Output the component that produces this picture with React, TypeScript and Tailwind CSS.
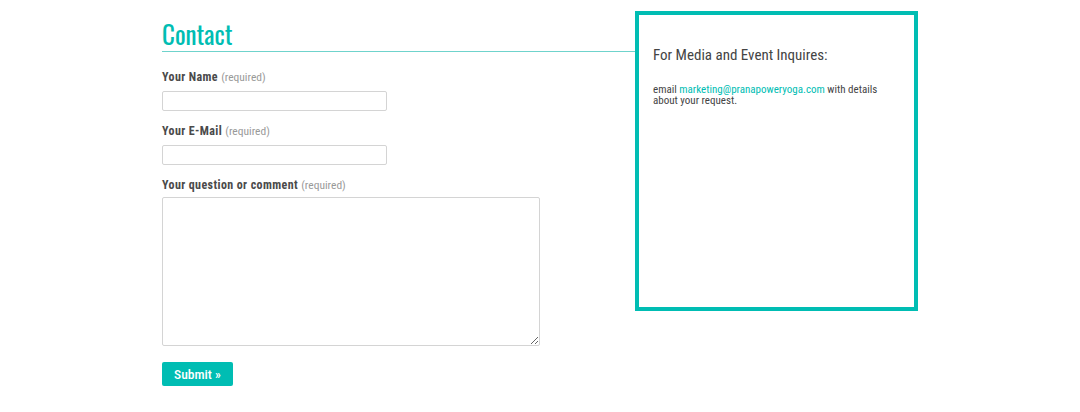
const teal = 'text-[#00bdb3]';

function Field({ label, area }: { label: string; area?: boolean }) {
  return (
    <div className="flex flex-col">
      <label className="text-[12px] leading-[15px] font-bold tracking-[0.4px] text-[#4a4a4a]">
        {label} <span className="text-[11.5px] font-normal tracking-normal text-[#999]">(required)</span>
      </label>
      {area ? (
        <textarea className="mt-[4px] w-[378px] h-[149px] border border-[#d4d4d4] rounded-[2px] bg-white resize" />
      ) : (
        <input type="text" className="mt-[6px] w-[225px] h-[20px] border border-[#d4d4d4] rounded-[2px] bg-white" />
      )}
    </div>
  );
}

export default function App() {
  return (
    <div
      className="w-[1080px] h-[412px] bg-white flex pt-[11px] pl-[162px]"
      style={{ fontFamily: '"Roboto Condensed", Roboto, sans-serif' }}
    >
      <div className="w-[473px] flex flex-col">
        <h1
          className={`mt-[8px] text-[25px] leading-[30px] pb-[2px] font-normal ${teal} border-b border-[#6fd3cc]`}
          style={{ fontFamily: 'Oswald, "Roboto Condensed", sans-serif' }}
        >
          Contact
        </h1>
        <div className="mt-[18px] flex flex-col gap-[13px]">
          <Field label="Your Name" />
          <Field label="Your E-Mail" />
          <Field label="Your question or comment" area />
        </div>
        <button className="mt-[16px] w-[71px] h-[24px] bg-[#00bdb3] rounded-[2px] text-white text-[13.5px] font-medium">
          Submit »
        </button>
      </div>
      <div className="w-[283px] h-[300px] border-4 border-[#00bdb3] pl-[14px] pt-[30px] text-[#444]">
        <p className="text-[15px] leading-[20px]">For Media and Event Inquires:</p>
        <p className="mt-[19px] text-[11px] leading-[11px]">
          email <span className={teal}>marketing@pranapoweryoga.com</span> with details
          <br />
          about your request.
        </p>
      </div>
    </div>
  );
}
